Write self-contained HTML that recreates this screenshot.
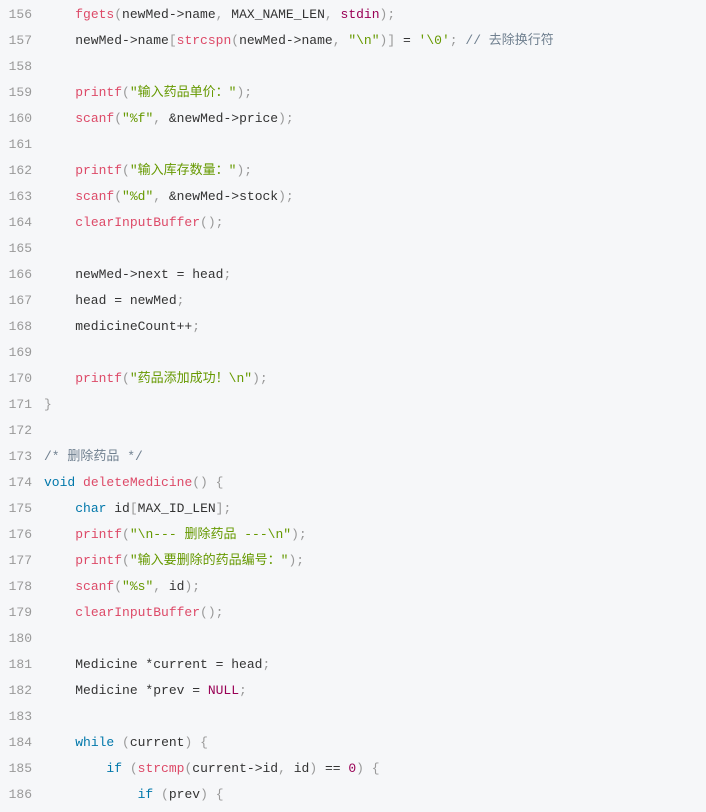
<!DOCTYPE html>
<html><head><meta charset="utf-8"><style>
body{margin:0;background:#f6f7f9;width:706px;height:812px;overflow:hidden}
.code{margin:0;padding-top:2px;font-family:"Liberation Mono","Noto Sans CJK SC",monospace;font-size:13px;line-height:26px;color:#333}
.l{display:block;white-space:pre;height:26px}
.ln{display:inline-block;width:32px;text-align:right;color:#999;margin-right:12px}
.f{color:#dd4a68}.s{color:#690}.k{color:#07a}.p{color:#999}.c{color:#708090}.n{color:#905}
</style></head><body><div class="code">
<span class="l"><span class="ln">156</span>    <span class="f">fgets</span><span class="p">(</span>newMed-&gt;name<span class="p">,</span> MAX_NAME_LEN<span class="p">,</span> <span class="n">stdin</span><span class="p">);</span></span>
<span class="l"><span class="ln">157</span>    newMed-&gt;name<span class="p">[</span><span class="f">strcspn</span><span class="p">(</span>newMed-&gt;name<span class="p">,</span> <span class="s">"\n"</span><span class="p">)]</span> = <span class="s">'\0'</span><span class="p">;</span> <span class="c">// 去除换行符</span></span>
<span class="l"><span class="ln">158</span></span>
<span class="l"><span class="ln">159</span>    <span class="f">printf</span><span class="p">(</span><span class="s">"输入药品单价："</span><span class="p">);</span></span>
<span class="l"><span class="ln">160</span>    <span class="f">scanf</span><span class="p">(</span><span class="s">"%f"</span><span class="p">,</span> &amp;newMed-&gt;price<span class="p">);</span></span>
<span class="l"><span class="ln">161</span></span>
<span class="l"><span class="ln">162</span>    <span class="f">printf</span><span class="p">(</span><span class="s">"输入库存数量："</span><span class="p">);</span></span>
<span class="l"><span class="ln">163</span>    <span class="f">scanf</span><span class="p">(</span><span class="s">"%d"</span><span class="p">,</span> &amp;newMed-&gt;stock<span class="p">);</span></span>
<span class="l"><span class="ln">164</span>    <span class="f">clearInputBuffer</span><span class="p">();</span></span>
<span class="l"><span class="ln">165</span></span>
<span class="l"><span class="ln">166</span>    newMed-&gt;next = head<span class="p">;</span></span>
<span class="l"><span class="ln">167</span>    head = newMed<span class="p">;</span></span>
<span class="l"><span class="ln">168</span>    medicineCount++<span class="p">;</span></span>
<span class="l"><span class="ln">169</span></span>
<span class="l"><span class="ln">170</span>    <span class="f">printf</span><span class="p">(</span><span class="s">"药品添加成功！\n"</span><span class="p">);</span></span>
<span class="l"><span class="ln">171</span><span class="p">}</span></span>
<span class="l"><span class="ln">172</span></span>
<span class="l"><span class="ln">173</span><span class="c">/* 删除药品 */</span></span>
<span class="l"><span class="ln">174</span><span class="k">void</span> <span class="f">deleteMedicine</span><span class="p">()</span> <span class="p">{</span></span>
<span class="l"><span class="ln">175</span>    <span class="k">char</span> id<span class="p">[</span>MAX_ID_LEN<span class="p">];</span></span>
<span class="l"><span class="ln">176</span>    <span class="f">printf</span><span class="p">(</span><span class="s">"\n--- 删除药品 ---\n"</span><span class="p">);</span></span>
<span class="l"><span class="ln">177</span>    <span class="f">printf</span><span class="p">(</span><span class="s">"输入要删除的药品编号："</span><span class="p">);</span></span>
<span class="l"><span class="ln">178</span>    <span class="f">scanf</span><span class="p">(</span><span class="s">"%s"</span><span class="p">,</span> id<span class="p">);</span></span>
<span class="l"><span class="ln">179</span>    <span class="f">clearInputBuffer</span><span class="p">();</span></span>
<span class="l"><span class="ln">180</span></span>
<span class="l"><span class="ln">181</span>    Medicine *current = head<span class="p">;</span></span>
<span class="l"><span class="ln">182</span>    Medicine *prev = <span class="n">NULL</span><span class="p">;</span></span>
<span class="l"><span class="ln">183</span></span>
<span class="l"><span class="ln">184</span>    <span class="k">while</span> <span class="p">(</span>current<span class="p">)</span> <span class="p">{</span></span>
<span class="l"><span class="ln">185</span>        <span class="k">if</span> <span class="p">(</span><span class="f">strcmp</span><span class="p">(</span>current-&gt;id<span class="p">,</span> id<span class="p">)</span> == <span class="n">0</span><span class="p">)</span> <span class="p">{</span></span>
<span class="l"><span class="ln">186</span>            <span class="k">if</span> <span class="p">(</span>prev<span class="p">)</span> <span class="p">{</span></span>
</div></body></html>
